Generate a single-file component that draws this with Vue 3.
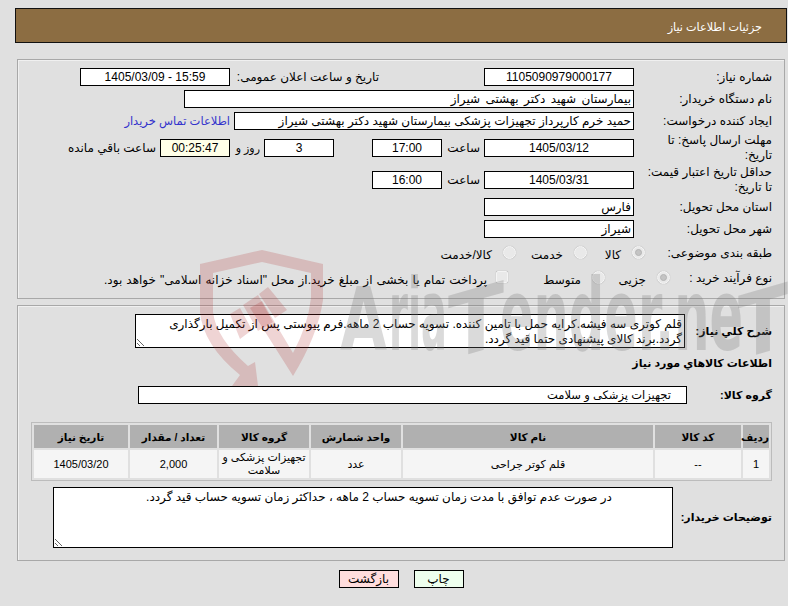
<template>
  <div class="page">
    <div class="title-bar">جزئیات اطلاعات نیاز</div>

    <div class="group first">
      <div class="row">
        <div class="label">شماره نیاز:</div>
        <div class="box w150 center">1105090979000177</div>
        <div class="label-inline announce">تاریخ و ساعت اعلان عمومی:</div>
        <div class="box w150 center ltr">1405/03/09 - 15:59</div>
      </div>
      <div class="row">
        <div class="label">نام دستگاه خریدار:</div>
        <div class="box w450 buyer-name">بیمارستان شهید دکتر بهشتی شیراز</div>
      </div>
      <div class="row">
        <div class="label">ایجاد کننده درخواست:</div>
        <div class="box w400">حمید خرم کارپرداز تجهیزات پزشکی بیمارستان شهید دکتر بهشتی شیراز</div>
        <a class="contact">اطلاعات تماس خریدار</a>
      </div>
      <div class="row tall">
        <div class="label">مهلت ارسال پاسخ: تا تاریخ:</div>
        <div class="box w150 center">1405/03/12</div>
        <div class="label-inline hour">ساعت</div>
        <div class="box w70 center">17:00</div>
        <div class="box w70 center days">3</div>
        <div class="label-inline day-text">روز و</div>
        <div class="box w70 center countdown">00:25:47</div>
        <div class="label-inline remain">ساعت باقي مانده</div>
      </div>
      <div class="row tall">
        <div class="label">حداقل تاریخ اعتبار قیمت: تا تاریخ:</div>
        <div class="box w150 center">1405/03/31</div>
        <div class="label-inline hour">ساعت</div>
        <div class="box w70 center">16:00</div>
      </div>
      <div class="row">
        <div class="label">استان محل تحویل:</div>
        <div class="box w150">فارس</div>
      </div>
      <div class="row">
        <div class="label">شهر محل تحویل:</div>
        <div class="box w150">شیراز</div>
      </div>
      <div class="row options">
        <div class="label">طبقه بندی موضوعی:</div>
        <label v-for="opt in subjectTypes" :key="opt.text" class="choice" :style="{ width: opt.width + 'px' }">
          <span class="radio" :class="{ on: opt.on }"></span>{{ opt.text }}
        </label>
      </div>
      <div class="row process">
        <div class="label">نوع فرآیند خرید :</div>
        <label v-for="opt in processTypes" :key="opt.text" class="choice" :style="{ width: opt.width + 'px' }">
          <span class="radio" :class="{ on: opt.on }"></span>{{ opt.text }}
        </label>
        <label class="choice payment">
          <span class="check"></span>پرداخت تمام یا بخشی از مبلغ خرید.از محل "اسناد خزانه اسلامی" خواهد بود.
        </label>
      </div>
    </div>

    <div class="group second">
      <div class="row desc-row">
        <div class="label bold w87">شرح كلي نياز:</div>
        <textarea class="note note-top" readonly :value="description"></textarea>
      </div>
      <div class="section-title">اطلاعات كالاهاي مورد نياز</div>
      <div class="row cat-row">
        <div class="label bold w85">گروه کالا:</div>
        <div class="box w549 category">تجهیزات پزشکی و سلامت</div>
      </div>
      <table class="items">
        <colgroup>
          <col v-for="w in columnWidths" :key="w.id" :style="{ width: w.px + 'px' }" />
        </colgroup>
        <thead>
          <tr>
            <th>ردیف</th>
            <th>کد کالا</th>
            <th>نام کالا</th>
            <th>واحد شمارش</th>
            <th>گروه کالا</th>
            <th>تعداد / مقدار</th>
            <th>تاریخ نیاز</th>
          </tr>
        </thead>
        <tbody>
          <tr>
            <td>1</td>
            <td>--</td>
            <td>قلم کوتر جراحی</td>
            <td>عدد</td>
            <td>تجهیزات پزشکی و سلامت</td>
            <td>2,000</td>
            <td>1405/03/20</td>
          </tr>
        </tbody>
      </table>
      <div class="row buyer-row">
        <div class="label bold w99">توضیحات خریدار:</div>
        <textarea class="note note-buyer" readonly :value="buyerNote"></textarea>
      </div>
    </div>

    <div class="actions">
      <button class="btn print">چاپ</button>
      <button class="btn back">بازگشت</button>
    </div>

    <!-- watermark over the page -->
    <svg class="watermark" viewBox="0 0 788 606" width="788" height="606">
      <g fill="#b02828" fill-opacity="0.2">
        <path d="M200 264 L262 250 L323 264 L323 300 Q318 335 293 376 L250 308 L262 301 L293 353 Q308 325 311 298 L311 273 L262 262 L213 273 L213 312 Q216 338 248 366 L255 362 L258 386 L232 386 L240 375 Q203 345 200 312 Z" />
        <path d="M230 314 L240 308 L252 330 L240 339 Z" />
        <path d="M243 305 L258 295 L273 322 L258 331 Z" />
        <path d="M259 294 L268 287 L287 310 L275 318 Z" />
      </g>
      <g class="wm-text">
        <text x="340" y="350" textLength="47" lengthAdjust="spacingAndGlyphs">A</text>
        <text class="wm-low" x="389" y="350" textLength="58" lengthAdjust="spacingAndGlyphs">ria</text>
        <text transform="translate(448 350) skewY(-16)" x="0" y="10" textLength="56" lengthAdjust="spacingAndGlyphs">T</text>
        <text class="wm-low" x="500" y="350" textLength="243" lengthAdjust="spacingAndGlyphs">ender.ne</text>
        <text transform="translate(738 350) skewY(-16)" x="0" y="10" textLength="50" lengthAdjust="spacingAndGlyphs">T</text>
      </g>
    </svg>
  </div>
</template>

<script setup>
const subjectTypes = [
  { text: 'کالا', on: true, width: 58 },
  { text: 'خدمت', on: false, width: 71 },
  { text: 'کالا/خدمت', on: false, width: 90 },
]

const processTypes = [
  { text: 'جزیی', on: true, width: 65 },
  { text: 'متوسط', on: false, width: 97 },
]

const columnWidths = [
  { id: 'row', px: 26 },
  { id: 'code', px: 86 },
  { id: 'name', px: 250 },
  { id: 'unit', px: 90 },
  { id: 'group', px: 90 },
  { id: 'qty', px: 87 },
  { id: 'date', px: 94 },
]

const description = 'قلم کوتری سه فیشه.کرایه حمل با تامین کننده. تسویه حساب 2 ماهه.فرم پیوستی پس از تکمیل بارگذاری گردد.برند کالای پیشنهادی حتما قید گردد.'
const buyerNote = 'در صورت عدم توافق با مدت زمان تسویه حساب 2 ماهه ، حداکثر زمان تسویه حساب قید گردد.'
</script>

<style>
html,
body {
  background: #e0e0e0;
}
</style>

<style scoped>
.page {
  position: relative;
  width: 788px;
  height: 606px;
  box-sizing: border-box;
  padding: 8px 1px 0 15px;
  direction: rtl;
  font-family: "Liberation Sans", "DejaVu Sans", sans-serif;
  font-size: 12px;
  color: #000;
  background: #e0e0e0;
  overflow: hidden;
}

.title-bar {
  height: 35px;
  box-sizing: border-box;
  border: 1px solid #111;
  background: #8c6d42;
  color: #fff;
  font-size: 11.2px;
  line-height: 36px;
  padding-right: 24px;
}

.group {
  margin: 0 2px;
  border: 1px solid #a8a8a8;
  box-shadow: inset 1px 1px 0 #f0f0f0;
  padding-right: 12px;
  box-sizing: border-box;
}

.group.first {
  margin-top: 16px;
  height: 240px;
  padding-top: 8px;
}

.group.second {
  margin-top: 6px;
  height: 256px;
  padding-top: 8px;
}

.row {
  display: flex;
  align-items: center;
  height: 18px;
  margin-bottom: 4px;
}

.row.tall {
  height: 28px;
}

.row.options {
  height: 22px;
}

.row.process {
  height: 20px;
}

.label {
  width: 138px;
  flex: none;
  box-sizing: border-box;
  padding-left: 4px;
  line-height: 15px;
}

.label.bold {
  font-weight: bold;
  font-size: 11px;
  padding-left: 0;
  white-space: nowrap;
}

.w87 { width: 87px; }
.w85 { width: 85px; }
.w99 { width: 99px; }

.box {
  flex: none;
  height: 18px;
  box-sizing: border-box;
  border: 1px solid #000;
  background: #fff;
  line-height: 17px;
  padding: 0 2px;
  white-space: nowrap;
  overflow: hidden;
}

.center {
  text-align: center;
}

.ltr {
  direction: ltr;
}

.buyer-name {
  word-spacing: 2px;
}

.category {
  font-size: 11.5px;
  padding-right: 15px;
}

.w150 { width: 150px; }
.w70 { width: 70px; }
.w450 { width: 450px; }
.w400 { width: 400px; }
.w549 { width: 549px; }

.label-inline {
  flex: none;
  white-space: nowrap;
}

.announce {
  margin-right: 105px;
  width: 149px;
}

.hour {
  width: 42px;
  padding-right: 4px;
  box-sizing: border-box;
}

.days {
  margin-right: 38px;
}

.day-text {
  width: 34px;
  padding-right: 4px;
  box-sizing: border-box;
  font-size: 11px;
}

.remain {
  padding-right: 4px;
}

.countdown {
  background: #ffffe8;
}

.contact {
  color: #3333cc;
  font-size: 11.5px;
  margin-right: 4px;
  white-space: nowrap;
}

.choice {
  display: flex;
  align-items: center;
  flex: none;
  white-space: nowrap;
  padding-top: 4px;
  box-sizing: border-box;
}

.payment {
  word-spacing: 0.8px;
}

.options .label {
  width: 127px;
}

.process .label {
  width: 102px;
}

.radio {
  width: 13px;
  height: 13px;
  border-radius: 50%;
  background: #e9e9e9;
  border: 1px solid #f8f8f8;
  box-shadow: 0 0 1px #a0a0a0;
  box-sizing: border-box;
  margin: -6px 0 0 11px;
  flex: none;
  position: relative;
}

.radio.on::after {
  content: "";
  position: absolute;
  inset: 2px;
  border-radius: 50%;
  background: #c4c4c4;
  border: 1px solid #b4b4b4;
  box-sizing: border-box;
}

.check {
  width: 12px;
  height: 12px;
  border-radius: 2px;
  background: #e9e9e9;
  border: 1px solid #f4f4f4;
  box-shadow: 0 0 1px #909090;
  box-sizing: border-box;
  margin: -6px 0 0 9px;
  flex: none;
}

.note {
  flex: none;
  display: block;
  box-sizing: border-box;
  border: 1px solid #000;
  background: #fff;
  font: inherit;
  line-height: 15px;
  padding: 2px;
  margin: 0;
  overflow: hidden;
  direction: rtl;
  resize: both;
  outline: none;
  border-radius: 0;
}

.desc-row {
  height: 34px;
  margin-bottom: 0;
}

.note-top {
  width: 550px;
  height: 34px;
}

.section-title {
  font-weight: bold;
  font-size: 11px;
  height: 38px;
  line-height: 30px;
}

.cat-row {
  margin-bottom: 18px;
}

.items {
  width: 741px;
  table-layout: fixed;
  border: 1px solid #bcbcbc;
  border-spacing: 2px;
  border-collapse: separate;
  font-size: 11px;
}

.items th {
  background: #b0b0b0;
  height: 23px;
  padding: 0;
  font-size: 10.5px;
}

.items td {
  background: #f5f5f5;
  height: 28px;
  padding: 0;
  text-align: center;
  line-height: 13px;
}

.buyer-row {
  height: 61px;
  margin-top: 6px;
}

.note-buyer {
  width: 620px;
  height: 61px;
  text-align: center;
  padding-left: 34px;
}

.actions {
  display: flex;
  justify-content: center;
  gap: 15px;
  margin-top: 9px;
}

.btn {
  height: 18px;
  box-sizing: border-box;
  border: 1px solid #000;
  font: inherit;
  padding: 0;
  line-height: 15px;
  color: #000;
}

.print {
  width: 50px;
  background: #eeffee;
}

.back {
  width: 60px;
  background: #ffdddd;
}

.watermark {
  position: absolute;
  left: 0;
  top: 0;
  pointer-events: none;
  clip-path: inset(0 0 220px 0);
}

.wm-text {
  font-family: "DejaVu Sans", sans-serif;
  font-weight: bold;
  font-size: 88px;
  fill: #787878;
  fill-opacity: 0.27;
  direction: ltr;
}

.wm-low {
  font-size: 100px;
}
</style>
